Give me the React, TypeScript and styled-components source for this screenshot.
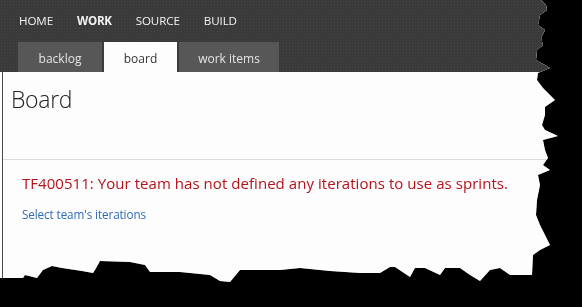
import styled, { createGlobalStyle } from "styled-components"

const GlobalStyle = createGlobalStyle`
    html, body {
        margin: 0;
        padding: 0;
        background: #000;
    }
    body {
        font-family: "Open Sans", "Noto Sans", "Liberation Sans", sans-serif;
        width: 582px;
        height: 307px;
        overflow: hidden;
    }
`

// torn paper edge along the right and bottom of the capture
const tornEdge = [
    "0 0", "541px 0", "546px 5px", "547px 10px", "540px 15px", "538px 25px", "545px 30px",
    "541px 38px", "543px 45px", "537px 50px", "536px 60px", "550px 68px", "538px 73px",
    "537px 80px", "543px 88px", "555px 100px", "545px 107px", "545px 115px", "542px 125px",
    "545px 130px", "558px 136px", "543px 140px", "545px 150px", "548px 158px", "543px 165px",
    "550px 170px", "538px 175px", "540px 185px", "537px 200px", "536px 215px", "540px 225px",
    "550px 245px", "540px 250px", "533px 255px", "532px 275px",
    "510px 275px", "500px 268px", "490px 270px", "480px 281px", "470px 275px", "460px 268px",
    "445px 268px", "440px 275px", "425px 268px", "415px 268px", "410px 277px", "395px 267px",
    "390px 267px", "380px 273px", "360px 273px", "330px 271px", "300px 268px", "280px 270px",
    "240px 270px", "230px 282px", "220px 281px", "210px 275px", "180px 272px", "150px 272px",
    "145px 265px", "130px 262px", "100px 261px", "95px 270px", "93px 273px", "82px 271px",
    "62px 268px", "52px 266px", "43px 270px", "37px 278px", "25px 275px", "23px 278px",
    "0 278px"
].join(", ")

const Shadow = styled.div`
    filter: drop-shadow(0 0 0.6px #777);
`

const Frame = styled.div`
    width: 582px;
    height: 307px;
    background: #fdfdfd;
    display: flex;
    flex-direction: column;
    clip-path: polygon(${tornEdge});
`

const TopBar = styled.header`
    background-color: #3a3a3a;
    background-image: radial-gradient(#444 0.8px, transparent 0.9px);
    background-size: 3px 3px;
    display: flex;
    flex-direction: column;
`

const NavRow = styled.nav`
    height: 42px;
    display: flex;
    align-items: center;
    gap: 24px;
    padding: 0 0 2px 19px;
    box-sizing: border-box;
`

const NavItem = styled.span<{ $active?: boolean }>`
    color: #f2f2f2;
    font-size: 11.6px;
    font-weight: ${({ $active }) => ($active ? 700 : 400)};
    letter-spacing: ${({ $active }) => ($active ? "-0.3px" : "-0.1px")};
`

const TabRow = styled.div`
    height: 30px;
    display: flex;
    gap: 2px;
    padding-left: 18px;
`

const Tab = styled.div<{ $active?: boolean; $width: number }>`
    width: ${({ $width }) => $width}px;
    display: flex;
    align-items: center;
    justify-content: center;
    padding-top: 3px;
    box-sizing: border-box;
    font-size: 12px;
    background: ${({ $active }) => ($active ? "#fdfdfd" : "#575757")};
    color: ${({ $active }) => ($active ? "#333" : "#e4e4e4")};
`

const Content = styled.main`
    flex: 1;
    margin-left: 2px;
    border-left: 1px solid #4a4a4a;
    display: flex;
    flex-direction: column;
`

const Heading = styled.h1`
    margin: 0;
    padding: 11px 0 0 8px;
    height: 87px;
    box-sizing: border-box;
    font-size: 23px;
    font-weight: 300;
    color: #222;
    letter-spacing: -0.3px;
`

const Divider = styled.hr`
    margin: 0;
    border: none;
    border-top: 1px solid #dcdcdc;
`

const ErrorText = styled.p`
    margin: 13px 0 0 19px;
    font-size: 15px;
    color: #b5121b;
    letter-spacing: 0.05px;
    white-space: nowrap;
`

const Link = styled.a`
    margin: 13px 0 0 19px;
    font-size: 11.7px;
    color: #2f6cb8;
    text-decoration: none;
    letter-spacing: -0.1px;
`

const navItems = ["HOME", "WORK", "SOURCE", "BUILD"]
const tabs = [
    { title: "backlog", width: 84 },
    { title: "board", width: 73 },
    { title: "work items", width: 100 }
]

export default function App() {
    return (
        <>
            <GlobalStyle />
            <Shadow>
                <Frame>
                    <TopBar>
                        <NavRow>
                            {navItems.map(item => (
                                <NavItem key={item} $active={item === "WORK"}>
                                    {item}
                                </NavItem>
                            ))}
                        </NavRow>
                        <TabRow>
                            {tabs.map(tab => (
                                <Tab key={tab.title} $width={tab.width} $active={tab.title === "board"}>
                                    {tab.title}
                                </Tab>
                            ))}
                        </TabRow>
                    </TopBar>
                    <Content>
                        <Heading>Board</Heading>
                        <Divider />
                        <ErrorText>
                            TF400511: Your team has not defined any iterations to use as sprints.
                        </ErrorText>
                        <Link href="#">Select team's iterations</Link>
                    </Content>
                </Frame>
            </Shadow>
        </>
    )
}
